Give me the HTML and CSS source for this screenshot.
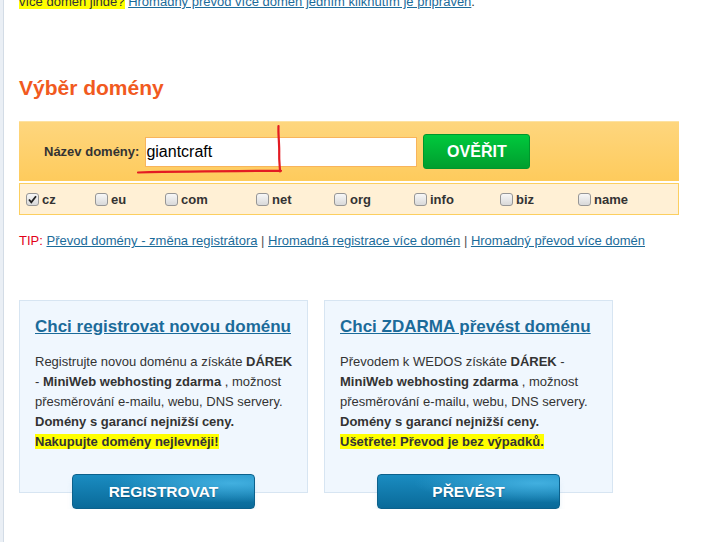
FILE: index.html
```html
<!DOCTYPE html>
<html lang="cs">
<head>
    <meta charset="UTF-8">
    <meta name="viewport" content="width=device-width, initial-scale=1.0">
    <title>Výběr domény</title>
    <link rel="stylesheet" href="styles.css">
</head>
<body>
    <div class="page">
        <p class="top"><span class="hl">více domén jinde?</span> <a href="#">Hromadný převod více domén jedním kliknutím je připraven</a>.</p>

        <h2 class="title">Výběr domény</h2>

        <!-- vyhledani domeny -->
        <form class="search">
            <label class="search-label" for="domain">Název domény:</label>
            <input class="search-input" id="domain" type="text" value="giantcraft">
            <button class="btn-check" type="button">OVĚŘIT</button>
            <svg class="scribble" width="300" height="60" viewBox="0 0 300 60">
                <path d="M119 50.5 C160 49.5 220 49 262 48.8" stroke="#e31b23" stroke-width="2.2" fill="none" stroke-linecap="round"/>
                <path d="M259.5 4 C259 12 260.5 22 260.2 32 C260 40 261 45 261 49.5" stroke="#e31b23" stroke-width="2.2" fill="none" stroke-linecap="round"/>
            </svg>
        </form>

        <div class="tlds">
            <label class="tld"><span class="box checked"><svg width="11" height="11" viewBox="0 0 11 11"><path d="M2 5.5 L4.3 8.3 L9 2.2" stroke="#222" stroke-width="1.8" fill="none"/></svg></span>cz</label>
            <label class="tld"><span class="box"></span>eu</label>
            <label class="tld"><span class="box"></span>com</label>
            <label class="tld"><span class="box"></span>net</label>
            <label class="tld"><span class="box"></span>org</label>
            <label class="tld"><span class="box"></span>info</label>
            <label class="tld"><span class="box"></span>biz</label>
            <label class="tld"><span class="box"></span>name</label>
        </div>

        <p class="tip"><span class="tip-red">TIP:</span> <a href="#">Převod domény - změna registrátora</a> | <a href="#">Hromadná registrace více domén</a> | <a href="#">Hromadný převod více domén</a></p>

        <!-- boxy -->
        <div class="cards">
            <div class="card-wrap">
                <div class="card">
                    <a class="card-title" href="#">Chci registrovat novou doménu</a>
                    <p class="card-text">Registrujte novou doménu a získáte <b>DÁREK</b> - <b>MiniWeb webhosting zdarma</b> , možnost přesměrování e-mailu, webu, DNS servery.<br><b>Domény s garancí nejnižší ceny.</b><br><b class="hl">Nakupujte domény nejlevněji!</b></p>
                </div>
                <a class="btn-blue" href="#">REGISTROVAT</a>
            </div>
            <div class="card-wrap">
                <div class="card">
                    <a class="card-title" href="#">Chci ZDARMA převést doménu</a>
                    <p class="card-text">Převodem k WEDOS získáte <b>DÁREK</b> - <b>MiniWeb webhosting zdarma</b> , možnost přesměrování e-mailu, webu, DNS servery.<br><b>Domény s garancí nejnižší ceny.</b><br><b class="hl">Ušetřete! Převod je bez výpadků.</b></p>
                </div>
                <a class="btn-blue" href="#">PŘEVÉST</a>
            </div>
        </div>
    </div>
</body>
</html>
```

FILE: styles.css
```css
body{
    margin: 0;
    background: linear-gradient(to right, #eaeff5 0, #eaeff5 3px, #d3dce6 3px, #d3dce6 4px, #fff 4px);
    font-family: "Liberation Sans", Arial, sans-serif;
    font-size: 13px;
    color: #333;
}
a{
    color: #1b6b9a;
}
.page{
    padding-left: 19px;
    width: 660px;
}
.hl{
    background-color: #ffff00;
}
.top{
    margin: -7px 0 0 0;
    line-height: 18px;
}
.title{
    margin: 65px 0 0 0;
    font-size: 21px;
    line-height: 24px;
    color: #f15a1f;
}
.search{
    position: relative;
    margin: 21px 0 0 0;
    height: 60px;
    box-sizing: border-box;
    border-top: 1px solid #fde2a2;
    background: linear-gradient(#fed67e, #fecb5c);
    display: flex;
    align-items: center;
    padding-left: 25px;
}
.search-label{
    font-weight: bold;
    font-size: 13px;
    color: #333;
    margin-right: 6px;
}
.search-input{
    width: 272px;
    height: 30px;
    box-sizing: border-box;
    border: 1px solid #f8b45c;
    padding: 0;
    margin: 1px 6px 0 0;
    font-family: "Liberation Sans", Arial, sans-serif;
    font-size: 16px;
    color: #000;
    background: #fff;
}
.btn-check{
    width: 107px;
    height: 35px;
    border: 1px solid #00962c;
    border-radius: 3px;
    background: linear-gradient(#00c93d, #009e2e);
    color: #fff;
    font-family: "Liberation Sans", Arial, sans-serif;
    font-weight: bold;
    font-size: 16px;
    padding: 0;
}
.scribble{
    position: absolute;
    left: 0;
    top: 0;
}
.tlds{
    margin-top: 2px;
    height: 32px;
    box-sizing: border-box;
    border: 1px solid #fccf60;
    background: #fff0d5;
    display: grid;
    grid-template-columns: 69px 70px 91px 78px 80px 86px 78px auto;
    align-items: center;
    padding-left: 6px;
}
.tld{
    display: flex;
    align-items: center;
    font-weight: bold;
    font-size: 13px;
    color: #333;
}
.box{
    width: 13px;
    height: 13px;
    box-sizing: border-box;
    border: 1px solid #969696;
    border-radius: 3px;
    background: linear-gradient(#f7f7f7, #d9d9d9);
    margin-right: 3px;
    display: flex;
    align-items: center;
    justify-content: center;
}
.tip{
    margin: 17px 0 0 0;
    line-height: 18px;
    color: #555;
}
.tip-red{
    color: #e2001a;
}
.cards{
    margin-top: 50px;
    display: flex;
    gap: 16px;
    align-items: flex-start;
}
.card-wrap{
    width: 289px;
    display: flex;
    flex-direction: column;
}
.card{
    box-sizing: border-box;
    border: 1px solid #d7e5f2;
    background: #f0f7fe;
    padding: 16px 12px 40px 15px;
}
.card-title{
    font-weight: bold;
    font-size: 17px;
    line-height: 20px;
}
.card-text{
    margin: 15px 0 0 0;
    line-height: 20px;
    color: #333;
}
.btn-blue{
    align-self: center;
    margin-top: -19px;
    width: 183px;
    height: 35px;
    box-sizing: border-box;
    border: 1px solid #0c618c;
    border-radius: 4px;
    background: radial-gradient(ellipse at 88% 25%, rgba(70,180,228,0.9), rgba(70,180,228,0) 55%), linear-gradient(#1a8cc1, #0a6a99);
    box-shadow: 0 6px 6px -2px rgba(160,200,225,0.45);
    color: #fff;
    text-decoration: none;
    font-weight: bold;
    font-size: 15.5px;
    text-align: center;
    line-height: 34px;
    text-shadow: 0 1px 1px rgba(0,40,70,0.4);
}
```
